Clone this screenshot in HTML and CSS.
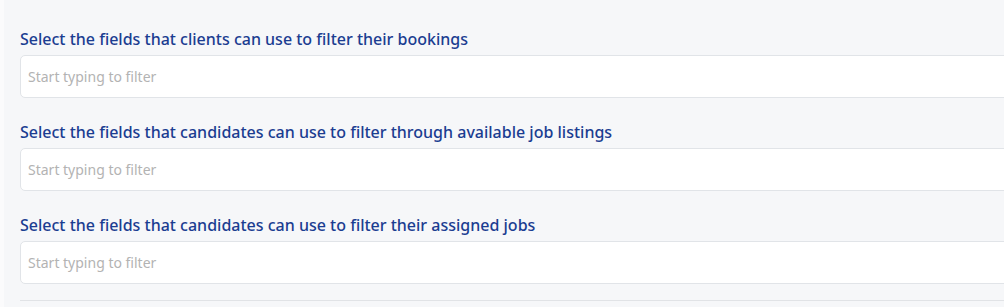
FILE: index.html
```html
<!DOCTYPE html>
<html lang="en">
  <head>
    <meta charset="UTF-8" />
    <meta name="viewport" content="width=device-width, initial-scale=1.0" />
    <title>Filter settings</title>

    <link rel="stylesheet" href="styles.css">
  </head>
  <body>
    <div class="panel">
      <!-- Client bookings -->
      <div class="field">
        <label class="label" for="client-filter">Select the fields that clients can use to filter their bookings</label>
        <input class="input" id="client-filter" type="text" placeholder="Start typing to filter" />
      </div>

      <!-- Job listings -->
      <div class="field">
        <label class="label" for="listing-filter">Select the fields that candidates can use to filter through available job listings</label>
        <input class="input" id="listing-filter" type="text" placeholder="Start typing to filter" />
      </div>

      <!-- Assigned jobs -->
      <div class="field">
        <label class="label" for="assigned-filter">Select the fields that candidates can use to filter their assigned jobs</label>
        <input class="input" id="assigned-filter" type="text" placeholder="Start typing to filter" />
      </div>

      <div class="divider"></div>
    </div>
  </body>
</html>
```

FILE: styles.css
```css
body {
  margin: 0;
  background: #fbfbfc;
  font-family: "Noto Sans", sans-serif;
}

.panel {
  box-sizing: border-box;
  margin-left: 4px;
  height: 100vh;
  padding: 27px 0 0 16px;
  background: #f6f7f9;
  display: flex;
  flex-direction: column;
  gap: 22px;
  overflow: hidden;
}

.field {
  display: flex;
  flex-direction: column;
  gap: 4px;
  margin-right: -20px;
}

.label {
  font-size: 16px;
  line-height: 24px;
  font-weight: 500;
  color: #1b3d91;
}

.input {
  box-sizing: border-box;
  height: 43px;
  padding: 0 7px;
  border: 1px solid #e1e4e8;
  border-radius: 5px;
  background: #fff;
  font-family: inherit;
  font-size: 14px;
  color: #333;
  outline: none;
}

.input::placeholder {
  color: #b3b3b3;
}

.divider {
  flex: none;
  margin: -6px -20px 0 0;
  height: 1px;
  background: #e1e3e6;
}
```
